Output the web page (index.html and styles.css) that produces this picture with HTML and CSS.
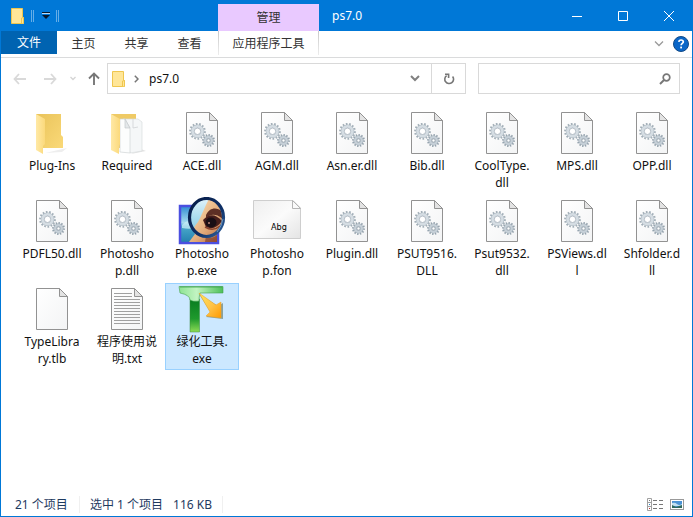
FILE: index.html
```html
<!DOCTYPE html>
<html lang="zh-CN">
<head>
<meta charset="utf-8">
<title>ps7.0</title>
<link rel="stylesheet" href="styles.css">
</head>
<body>
<svg class="defs" aria-hidden="true">
  <defs>
    <linearGradient id="gPaper" x1="0" y1="0" x2="1" y2="1"><stop offset="0" stop-color="#ffffff"/><stop offset="1" stop-color="#f3f4f5"/></linearGradient>
    <linearGradient id="gFlap" x1="0" y1="0" x2="1" y2="0"><stop offset="0" stop-color="#ffe9a6"/><stop offset="1" stop-color="#fbd97b"/></linearGradient>
    <linearGradient id="gBack" x1="0" y1="0" x2="1" y2="1"><stop offset="0" stop-color="#e9c35a"/><stop offset="1" stop-color="#fad978"/></linearGradient>
    <linearGradient id="gFont" x1="0" y1="0" x2="1" y2="1"><stop offset="0" stop-color="#efefef"/><stop offset="0.5" stop-color="#fbfbfb"/><stop offset="1" stop-color="#e4e4e4"/></linearGradient>
    <linearGradient id="gSky" x1="0" y1="0" x2="0" y2="1"><stop offset="0" stop-color="#2f8bd2"/><stop offset="0.45" stop-color="#a5dcee"/><stop offset="0.55" stop-color="#4aa9cb"/><stop offset="1" stop-color="#237fae"/></linearGradient>
    <linearGradient id="gLensSky" x1="0" y1="0" x2="0" y2="1"><stop offset="0" stop-color="#e4f4fb"/><stop offset="0.5" stop-color="#a9dcee"/><stop offset="1" stop-color="#7cc4dc"/></linearGradient>
    <linearGradient id="gSkin" x1="0" y1="0" x2="1" y2="1"><stop offset="0" stop-color="#ffe4b5"/><stop offset="0.6" stop-color="#e0a878"/><stop offset="1" stop-color="#b5693f"/></linearGradient>
    <linearGradient id="gRing" x1="0" y1="0" x2="1" y2="1"><stop offset="0" stop-color="#061b45"/><stop offset="0.6" stop-color="#0e2f66"/><stop offset="1" stop-color="#34659f"/></linearGradient>
    <linearGradient id="gBar" x1="0" y1="0" x2="1" y2="0"><stop offset="0" stop-color="#8de393"/><stop offset="0.4" stop-color="#c2f4c2"/><stop offset="1" stop-color="#4ec05a"/></linearGradient>
    <linearGradient id="gStem" x1="0" y1="0" x2="0" y2="1"><stop offset="0" stop-color="#087c20"/><stop offset="0.6" stop-color="#1f9a2d"/><stop offset="1" stop-color="#8ddb55"/></linearGradient>
    <linearGradient id="gArrow" x1="0" y1="0" x2="1" y2="1"><stop offset="0" stop-color="#ffe75a"/><stop offset="0.55" stop-color="#ffc247"/><stop offset="1" stop-color="#ff9a00"/></linearGradient>
    <clipPath id="lens"><ellipse cx="28" cy="20.500" rx="16" ry="18.500"/></clipPath>

    <symbol id="page" viewBox="0 0 48 48">
      <path d="M8.500 3.500H31.500L39.500 11.500V44.500H8.500Z" fill="url(#gPaper)" stroke="#929292"/>
      <path d="M31.500 3.500V11.500H39.500Z" fill="#e3e3e3" stroke="#929292"/>
    </symbol>
    <symbol id="dll" viewBox="0 0 48 48">
      <use href="#page"/>
      <g fill="none">
        <circle cx="19.500" cy="22.300" r="7.300" stroke="#a3afb8" stroke-width="2.200" pathLength="28" stroke-dasharray="1 1"/>
        <circle cx="19.500" cy="22.300" r="5" stroke="#a9b5be" stroke-width="3.600"/>
        <circle cx="19.500" cy="22.300" r="4.900" stroke="#d5dde3" stroke-width="2.800"/>
        <circle cx="19.500" cy="22.300" r="3.200" fill="#fff" stroke="#a8b3bc" stroke-width="0.800"/>
        <circle cx="30.500" cy="31.500" r="5.500" stroke="#95a3ae" stroke-width="2" pathLength="24" stroke-dasharray="1 1"/>
        <circle cx="30.500" cy="31.500" r="3.500" stroke="#9ba8b2" stroke-width="3"/>
        <circle cx="30.500" cy="31.500" r="3.400" stroke="#c6d0d8" stroke-width="2.200"/>
        <circle cx="30.500" cy="31.500" r="1.600" fill="#fff" stroke="#8f9da8" stroke-width="0.800"/>
      </g>
    </symbol>
    <symbol id="txt" viewBox="0 0 48 48">
      <use href="#page"/>
      <path d="M11 8.500H29M11 11.500H29M11 14.500H37M11 17.500H37M11 20.500H37M11 23.500H37M11 26.500H37M11 29.500H37M11 32.500H37M11 35.500H37M11 38.500H37" stroke="#a0a0a0"/>
    </symbol>
    <symbol id="folder" viewBox="0 0 48 48">
      <path d="M17 44L39 39L34 43Z" fill="#eeeeee"/>
      <path d="M8 5H33V26L35 28V39H14Z" fill="url(#gBack)"/>
      <path d="M8 5L17 10V35L15 37V45L8 41Z" fill="url(#gFlap)"/>
    </symbol>
    <symbol id="folderDocs" viewBox="0 0 48 48">
      <path d="M28 45L43 42L38 40Z" fill="#e4e4e4"/>
      <path d="M8 5H33V39H14Z" fill="#efca65"/>
      <path d="M20 10H35L39 13V42L27 44Z" fill="#f5f7f8" stroke="#d9dcde" stroke-width="0.700"/>
      <path d="M30 10V19L35 18" fill="none" stroke="#cfd2d4" stroke-width="0.800"/>
      <path d="M17 10H22L27 19V44L17 43Z" fill="#fcfdfd" stroke="#d0d4d6" stroke-width="0.700"/>
      <path d="M22 10V19H27Z" fill="#e4e8ea" stroke="#c4c9cb" stroke-width="0.700"/>
      <path d="M8 5L17 10V35L16 37V45L8 41Z" fill="url(#gFlap)"/>
    </symbol>
    <symbol id="fontFile" viewBox="0 0 48 48">
      <path d="M0.500 3.500H40L47.500 11V41.500H0.500Z" fill="url(#gFont)" stroke="#cecece"/>
      <path d="M39.500 3.500V11.500H47.500Z" fill="#fafafa" stroke="#b5b5b5"/>
      <text x="18" y="33" class="glyph-sample">Abg</text>
    </symbol>
    <symbol id="photoshop" viewBox="0 0 48 48">
      <rect x="2" y="9" width="38" height="37" fill="url(#gSky)" stroke="#4b4fe0" stroke-width="2.500"/>
      <path d="M4 28Q10 21 17 26T26 23V29Q14 33 4 31Z" fill="#c9edf5" opacity=".75"/>
      <path d="M23 22C18 31 15 34 17 37L11 45H39V20Z" fill="url(#gSkin)"/>
      <path d="M28 39Q34 43 39 38V45H27Z" fill="#75362b" opacity=".6"/>
      <g clip-path="url(#lens)">
        <rect x="10" width="36" height="42" fill="url(#gLensSky)"/>
        <path d="M31 2C27 9 25 16 20 25C14 32 14 35 22 41H46V2Z" fill="url(#gSkin)"/>
        <path d="M28 18C32 10 39 10 45 15V22C38 16 32 17 28 21Z" fill="#5d2f25"/>
        <path d="M25 23Q34 13 44 24Q37 34 28 30Z" fill="#451d1b"/>
        <ellipse cx="33" cy="25.500" rx="5.500" ry="5" fill="#190e15"/>
        <circle cx="31" cy="26" r="1" fill="#b98479"/>
        <path d="M27 30Q35 35 42 29" fill="none" stroke="#874330" stroke-width="1.500"/>
      </g>
      <ellipse cx="28.500" cy="20.500" rx="17" ry="19" fill="none" stroke="url(#gRing)" stroke-width="3.200"/>
      <path d="M39 35Q44 29 45 22" fill="none" stroke="#7faad0" stroke-width="0.800"/>
    </symbol>
    <symbol id="greenTool" viewBox="0 0 48 48">
      <path d="M12 14H21.500V47H12Z" fill="url(#gStem)" stroke="#398b3d" stroke-width="0.500"/>
      <path d="M1 1.500H45V8H22Q21 12 21 16Q15 17 12 15Q12 10 2 8Z" fill="url(#gBar)" stroke="#45a34f" stroke-width="0.600"/>
      <path d="M2 2H44" stroke="#3aa149" stroke-width="0.800"/>
      <path d="M21 9L40 21L45 18V34L28 32L33 28Z" fill="#657b69" opacity=".65"/>
      <path d="M21 8L38 20L43 17V33L28 31L32 27Z" fill="url(#gArrow)" stroke="#eda323" stroke-width="0.500"/>
    </symbol>
    <symbol id="smallFolder" viewBox="0 0 14 16">
      <path d="M0.500 0.500H11.500V9.500H12.500V15.500H0.500Z" fill="#ffe698" stroke="#efc64e"/>
      <path d="M10.500 15V10L12.500 9.500V15.500" fill="#ffe698" stroke="#efc64e"/>
    </symbol>
  </defs>
</svg>

<div class="window">
  <header class="titlebar">
    <div class="quick">
      <svg class="small-folder" viewBox="0 0 14 16"><use href="#smallFolder"/></svg>
      <span class="rail"></span>
      <button class="quick-menu" aria-label="自定义快速访问工具栏"><svg width="8" height="8" viewBox="0 0 8 8"><path d="M0 1.500H8" stroke="#b7d9f4"/><path d="M0 0.500H8" stroke="#06192c"/><path d="M0 3H8L4 7Z" fill="#06192c"/></svg></button>
      <span class="rail"></span>
    </div>
    <div class="context">管理</div>
    <h1 class="title">ps7.0</h1>
    <div class="controls">
      <button aria-label="最小化"><svg width="10" height="10" viewBox="0 0 10 10"><path d="M0 5.500H10"/></svg></button>
      <button aria-label="最大化"><svg width="10" height="10" viewBox="0 0 10 10"><path d="M0.500 0.500H9.500V9.500H0.500Z"/></svg></button>
      <button aria-label="关闭"><svg width="10" height="10" viewBox="0 0 10 10"><path d="M0 0L10 10M10 0L0 10"/></svg></button>
    </div>
  </header>

  <nav class="ribbon">
    <button class="file-tab">文件</button>
    <button class="tab">主页</button>
    <button class="tab">共享</button>
    <button class="tab">查看</button>
    <button class="tool-tab">应用程序工具</button>
    <div class="ribbon-end">
      <button aria-label="展开功能区"><svg width="10" height="6" viewBox="0 0 10 6"><path d="M1 0.500L5 4.500L9 0.500" fill="none" stroke="#9a9a9a" stroke-width="1.300"/></svg></button>
      <button aria-label="帮助"><svg width="16" height="16" viewBox="0 0 16 16"><circle cx="8" cy="8" r="7.500" fill="#0a66c8" stroke="#124a87"/><path d="M5.800 5.900Q6 4 8.100 4T10.300 5.900C10.300 7.400 8.100 7.500 8.100 9.300" fill="none" stroke="#fff" stroke-width="1.700"/><rect x="7.200" y="10.600" width="1.800" height="1.800" fill="#fff"/></svg></button>
    </div>
  </nav>

  <div class="navigation">
    <div class="history">
      <button aria-label="后退"><svg width="14" height="12" viewBox="0 0 14 12"><path d="M13 6H1.500M6 1L1.500 6L6 11" fill="none" stroke="#d9d9d9" stroke-width="1.800"/></svg></button>
      <button aria-label="前进"><svg width="14" height="12" viewBox="0 0 14 12"><path d="M1 6H12.500M8 1L12.500 6L8 11" fill="none" stroke="#d9d9d9" stroke-width="1.800"/></svg></button>
      <button class="recent" aria-label="最近浏览的位置"><svg width="6" height="5" viewBox="0 0 6 5"><path d="M0.500 1L3 3.500L5.500 1" fill="none" stroke="#d4d4d4" stroke-width="1.300"/></svg></button>
      <button class="up" aria-label="向上"><svg width="12" height="13" viewBox="0 0 12 13"><path d="M6 13V1.500M1 6.500L6 1.500L11 6.500" fill="none" stroke="#777" stroke-width="1.900"/></svg></button>
    </div>
    <div class="address">
      <svg class="small-folder" viewBox="0 0 14 16"><use href="#smallFolder"/></svg>
      <svg class="crumb-arrow" width="5" height="8" viewBox="0 0 5 8"><path d="M0.800 0.800L4 4L0.800 7.200" fill="none" stroke="#777" stroke-width="1.500"/></svg>
      <button class="crumb">ps7.0</button>
      <button class="history-drop" aria-label="以前的位置"><svg width="10" height="7" viewBox="0 0 10 7"><path d="M1 1L5 5L9 1" fill="none" stroke="#808080" stroke-width="2"/></svg></button>
      <button class="refresh" aria-label="刷新"><svg width="12" height="12" viewBox="0 0 12 12"><path d="M9.600 3.400A4.400 4.400 0 1 1 3.600 2.600" fill="none" stroke="#777" stroke-width="1.600"/><path d="M2 1.200H5.600V5" fill="none" stroke="#777" stroke-width="1.600"/></svg></button>
    </div>
    <div class="search">
      <input type="search" aria-label="搜索">
      <svg width="12" height="12" viewBox="0 0 12 12"><circle cx="7.500" cy="4.500" r="3.300" fill="none" stroke="#777" stroke-width="1.700"/><path d="M5 7L1 11" stroke="#777" stroke-width="1.900"/></svg>
    </div>
  </div>

  <main class="files">
    <button class="file"><svg><use href="#folder"/></svg><span>Plug-Ins</span></button>
    <button class="file"><svg><use href="#folderDocs"/></svg><span>Required</span></button>
    <button class="file"><svg><use href="#dll"/></svg><span>ACE.dll</span></button>
    <button class="file"><svg><use href="#dll"/></svg><span>AGM.dll</span></button>
    <button class="file"><svg><use href="#dll"/></svg><span>Asn.er.dll</span></button>
    <button class="file"><svg><use href="#dll"/></svg><span>Bib.dll</span></button>
    <button class="file"><svg><use href="#dll"/></svg><span>CoolType.<br>dll</span></button>
    <button class="file"><svg><use href="#dll"/></svg><span>MPS.dll</span></button>
    <button class="file"><svg><use href="#dll"/></svg><span>OPP.dll</span></button>
    <button class="file"><svg><use href="#dll"/></svg><span>PDFL50.dll</span></button>
    <button class="file"><svg><use href="#dll"/></svg><span>Photosho<br>p.dll</span></button>
    <button class="file"><svg><use href="#photoshop"/></svg><span>Photosho<br>p.exe</span></button>
    <button class="file"><svg><use href="#fontFile"/></svg><span>Photosho<br>p.fon</span></button>
    <button class="file"><svg><use href="#dll"/></svg><span>Plugin.dll</span></button>
    <button class="file"><svg><use href="#dll"/></svg><span>PSUT9516.<br>DLL</span></button>
    <button class="file"><svg><use href="#dll"/></svg><span>Psut9532.<br>dll</span></button>
    <button class="file"><svg><use href="#dll"/></svg><span>PSViews.dl<br>l</span></button>
    <button class="file"><svg><use href="#dll"/></svg><span>Shfolder.d<br>ll</span></button>
    <button class="file"><svg><use href="#page"/></svg><span>TypeLibra<br>ry.tlb</span></button>
    <button class="file"><svg><use href="#txt"/></svg><span>程序使用说<br>明.txt</span></button>
    <button class="file selected"><svg><use href="#greenTool"/></svg><span>绿化工具.<br>exe</span></button>
  </main>

  <footer class="status">
    <span class="count">21 个项目</span>
    <span class="selection"><span>选中 1 个项目</span><span>116 KB</span></span>
    <div class="views">
      <button aria-label="详细信息"><svg width="16" height="13" viewBox="0 0 16 13"><path d="M0.500 0.500H4.500V12.500H0.500ZM0.500 4.500H4.500M0.500 8.500H4.500" fill="#fff" stroke="#a0a0a0"/><path d="M6 2.500H10M12 2.500H16M6 6.500H10M12 6.500H16M6 10.500H10M12 10.500H16" stroke="#777"/><path d="M2 2.500H3" stroke="#777"/><path d="M2 6.500H3" stroke="#2783c9"/><path d="M2 10.500H3" stroke="#c03333"/></svg></button>
      <button aria-label="大图标"><svg width="14" height="11" viewBox="0 0 14 11"><rect x="0.500" y="0.500" width="13" height="10" fill="#fff" stroke="#999"/><rect x="2" y="2" width="10" height="7" fill="#4c93d4"/><path d="M2 4Q5 3 7 5T12 5V7H2Z" fill="#c1dff0"/><path d="M2 6L6 8L12 6V9H2Z" fill="#2d685c"/></svg></button>
    </div>
  </footer>
</div>
</body>
</html>
```
FILE: styles.css
```css
* {
  box-sizing: border-box;
}

body {
  margin: 0;
  font-family: "Noto Sans", "Noto Sans CJK SC", sans-serif;
  font-size: 12px;
  line-height: 17px;
  color: #111;
}

button {
  display: flex;
  align-items: center;
  justify-content: center;
  margin: 0;
  padding: 0;
  border: 0;
  background: none;
  color: inherit;
  font: inherit;
}

svg {
  display: block;
  flex: none;
}

.defs {
  position: absolute;
  width: 0;
  height: 0;
}

.glyph-sample {
  font-family: "Liberation Sans Narrow", "DejaVu Sans Condensed", sans-serif;
  font-size: 9px;
}

.window {
  display: flex;
  flex-direction: column;
  min-height: 100vh;
  border: 1px solid #0078d7;
  border-top: 0;
  background: #fff;
}

.titlebar {
  display: flex;
  height: 31px;
  background: #0078d7;
  color: #fff;
}

.quick {
  display: flex;
  align-items: center;
  width: 217px;
  padding-left: 10px;
}

.small-folder {
  width: 14px;
  height: 16px;
}

.rail {
  width: 3px;
  height: 12px;
  margin-left: 6px;
  border: 1px solid #65aee8;
  border-width: 0 1px;
}

.quick-menu {
  width: 12px;
  height: 20px;
  margin-left: 6px;
}

.quick-menu + .rail {
  margin-left: 4px;
}

.context {
  display: flex;
  align-items: center;
  justify-content: center;
  width: 101px;
  margin-top: 4px;
  background: #e9c9ff;
  color: #333;
}

.title {
  flex: 1;
  margin: 0;
  padding-left: 13px;
  font-size: 12px;
  font-weight: 400;
  line-height: 31px;
}

.controls {
  display: flex;
}

.controls button {
  width: 46px;
}

.controls path {
  fill: none;
  stroke: #fff;
}

.ribbon {
  display: flex;
  align-items: flex-start;
  height: 27px;
  border-bottom: 1px solid #dadbdc;
  color: #333;
}

.file-tab {
  width: 56px;
  height: 23px;
  background: #0063b1;
  color: #fff;
}

.tab {
  width: 53px;
  height: 24px;
}

.tool-tab {
  width: 101px;
  height: 24px;
  margin-left: 2px;
  border: 1px solid;
  border-width: 0 1px;
  border-image: linear-gradient(#c8c8c8, #eeeeee) 1;
}

.ribbon-end {
  display: flex;
  gap: 9px;
  height: 26px;
  margin-left: auto;
  padding-right: 3px;
}

.navigation {
  display: flex;
  align-items: center;
  height: 41px;
  padding: 0 12px;
}

.history {
  display: flex;
  align-items: center;
  gap: 16px;
  width: 94px;
}

.recent {
  margin-left: -3px;
}

.up {
  margin-left: -4px;
}

.address {
  display: flex;
  flex: 1;
  align-items: center;
  height: 31px;
  padding-left: 4px;
  border: 1px solid #d9d9d9;
}

.crumb-arrow {
  margin-left: 8px;
}

.crumb {
  margin-left: 10px;
}

.history-drop {
  width: 32px;
  height: 29px;
  margin-left: auto;
}

.refresh {
  width: 34px;
  height: 29px;
  border-left: 1px solid #d9d9d9;
}

.search {
  display: flex;
  align-items: center;
  width: 202px;
  height: 31px;
  margin-left: 12px;
  padding-right: 8px;
  border: 1px solid #d9d9d9;
}

.search input {
  flex: 1;
  min-width: 0;
  padding: 0 8px;
  border: 0;
  outline: 0;
  background: none;
  font: inherit;
}

.files {
  display: grid;
  flex: 1;
  grid-template-columns: repeat(auto-fill, 74px);
  grid-auto-rows: 87px;
  align-content: start;
  gap: 1px;
  padding: 8px 0 8px 14px;
}

.file {
  flex-direction: column;
  justify-content: flex-start;
  padding-top: 1px;
  border: 1px solid transparent;
  text-align: center;
}

.file svg {
  width: 48px;
  height: 48px;
}

.file.selected {
  border-color: #99d1ff;
  background: #cce8ff;
}

.status {
  display: flex;
  align-items: center;
  height: 24px;
  padding: 0 8px 0 14px;
  color: #1e3a5f;
}

.count {
  width: 65px;
  border-right: 1px solid #f0f0f0;
}

.selection {
  display: flex;
  gap: 10px;
  padding: 0 10px;
  border-right: 1px solid #f0f0f0;
}

.views {
  display: flex;
  gap: 7px;
  margin-left: auto;
}
```
